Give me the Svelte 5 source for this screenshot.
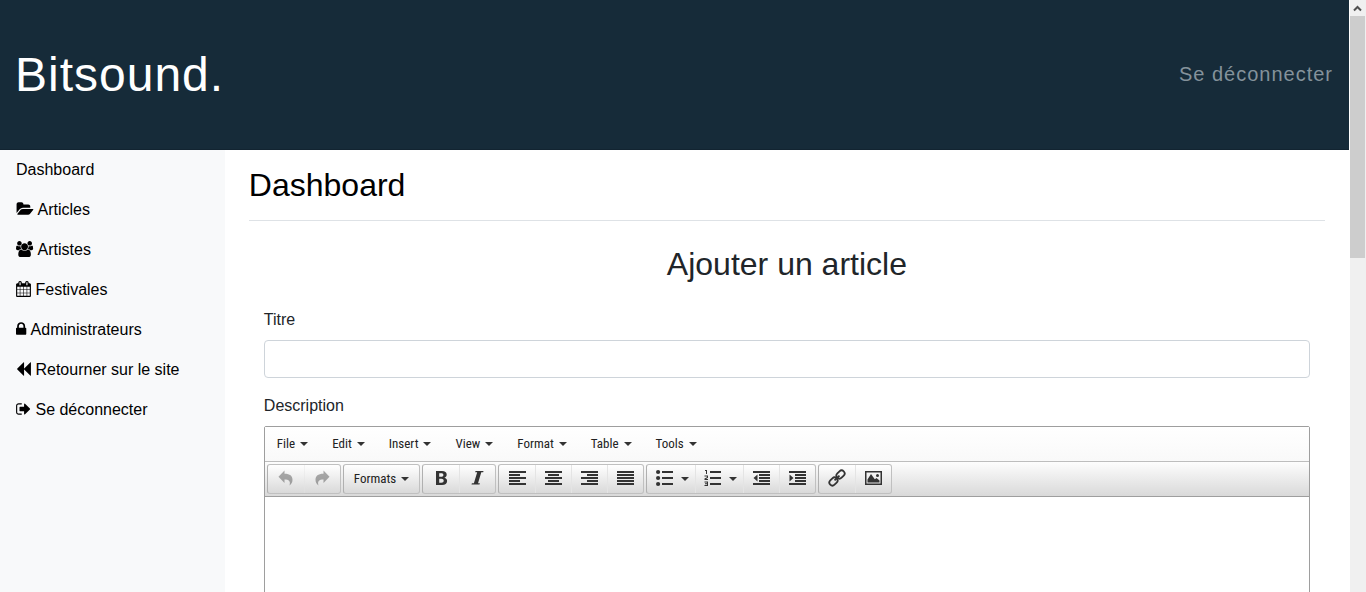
<script>
  const links = [
    { label: 'Dashboard' },
    {
      label: 'Articles', width: 18, box: '0 0 2016 1792',
      d: 'M1943 952q0 31-31 66l-336 396q-43 51-120.5 86.5t-143.5 35.5h-1088q-34 0-60.5-13t-26.5-43q0-31 31-66l336-396q43-51 120.5-86.5t143.5-35.5h1088q34 0 60.5 13t26.5 43zm-343-344v160h-832q-94 0-197 47.5t-164 119.5l-337 396-5 6q0-4-.5-12.5t-.5-12.5v-960q0-92 66-158t158-66h320q92 0 158 66t66 158v32h544q92 0 158 66t66 158z'
    },
    {
      label: 'Artistes', width: 18, box: '0 0 2016 1792',
      d: 'M593 896q-162 5-265 128h-134q-82 0-138-40.5t-56-118.5q0-353 124-353 6 0 43.5 21t97.5 42.5 119 21.5q67 0 133-23-5 37-5 66 0 139 81 256zm1071 637q0 120-73 189.5t-194 69.5h-874q-121 0-194-69.5t-73-189.5q0-53 3.5-103.5t14-109 26.5-108.5 43-97.5 62-81 85.5-53.5 111.5-20q10 0 43 21.5t73 48 107 48 135 21.5 135-21.5 107-48 73-48 43-21.5q61 0 111.5 20t85.5 53.5 62 81 43 97.5 26.5 108.5 14 109 3.5 103.5zm-1024-1277q0 106-75 181t-181 75-181-75-75-181 75-181 181-75 181 75 75 181zm704 384q0 159-112.5 271.5t-271.5 112.5-271.5-112.5-112.5-271.5 112.5-271.5 271.5-112.5 271.5 112.5 112.5 271.5zm576 225q0 78-56 118.5t-138 40.5h-134q-103-123-265-128 81-117 81-256 0-29-5-66 66 23 133 23 59 0 119-21.5t97.5-42.5 43.5-21q124 0 124 353zm-128-609q0 106-75 181t-181 75-181-75-75-181 75-181 181-75 181 75 75 181z'
    },
    {
      label: 'Festivales', width: 15, box: '64 0 1664 1792',
      d: 'M192 1664h288v-288h-288v288zm352 0h320v-288h-320v288zm-352-352h288v-320h-288v320zm352 0h320v-320h-320v320zm-352-384h288v-288h-288v288zm736 736h320v-288h-320v288zm-384-736h320v-288h-320v288zm768 736h288v-288h-288v288zm-384-352h320v-320h-320v320zm-352-864v-288q0-13-9.5-22.5t-22.5-9.5h-64q-13 0-22.5 9.5t-9.5 22.5v288q0 13 9.5 22.5t22.5 9.5h64q13 0 22.5-9.5t9.5-22.5zm736 864h288v-320h-288v320zm-384-384h320v-288h-320v288zm384 0h288v-288h-288v288zm32-480v-288q0-13-9.5-22.5t-22.5-9.5h-64q-13 0-22.5 9.5t-9.5 22.5v288q0 13 9.5 22.5t22.5 9.5h64q13 0 22.5-9.5t9.5-22.5zm384-64v1280q0 52-38 90t-90 38h-1408q-52 0-90-38t-38-90v-1280q0-52 38-90t90-38h128v-96q0-66 47-113t113-47h64q66 0 113 47t47 113v96h384v-96q0-66 47-113t113-47h64q66 0 113 47t47 113v96h128q52 0 90 38t38 90z'
    },
    {
      label: 'Administrateurs', width: 11, box: '320 0 1232 1792',
      d: 'M640 768h512v-192q0-106-75-181t-181-75-181 75-75 181v192zm832 96v576q0 40-28 68t-68 28h-960q-40 0-68-28t-28-68v-576q0-40 28-68t68-28h32v-192q0-184 132-316t316-132 316 132 132 316v192h32q40 0 68 28t28 68z'
    },
    {
      label: 'Retourner sur le site', width: 15, box: '64 0 1664 1792',
      d: 'M1683 141q19-19 32-13t13 32v1472q0 26-13 32t-32-13l-710-710q-9-9-13-19v710q0 26-13 32t-32-13l-710-710q-19-19-19-45t19-45l710-710q19-19 32-13t13 32v710q4-10 13-19z'
    },
    {
      label: 'Se déconnecter', width: 15, box: '64 0 1664 1792',
      d: 'M704 1440q0 4 1 20t.5 26.5-3 23.5-10 19.5-20.5 6.5h-320q-119 0-203.5-84.5t-84.5-203.5v-704q0-119 84.5-203.5t203.5-84.5h320q13 0 22.5 9.5t9.5 22.5q0 4 1 20t.5 26.5-3 23.5-10 19.5-20.5 6.5h-320q-66 0-113 47t-47 113v704q0 66 47 113t113 47h312l11.5 1 11.5 3 8 5.5 7 9 2 13.5zm928-544q0 26-19 45l-544 544q-19 19-45 19t-45-19-19-45v-288h-448q-26 0-45-19t-19-45v-384q0-26 19-45t45-19h448v-288q0-26 19-45t45-19 45 19l544 544q19 19 19 45z'
    }
  ];

  const menus = ['File', 'Edit', 'Insert', 'View', 'Format', 'Table', 'Tools'];

  // Toolbar glyphs are drawn on an 18 x 18 grid.
  const groups = [
    [
      { name: 'Undo', off: true, d: 'M7.500 1.500v3.300c5.500 0 8 2.300 8 6 0 2.400-1 4.300-3 5.700 1.300-4.200-.5-6-5-6v3.500L1.500 7.800z' },
      { name: 'Redo', off: true, d: 'M10.500 1.500v3.300c-5.500 0-8 2.300-8 6 0 2.400 1 4.300 3 5.700-1.300-4.200.5-6 5-6v3.500l6-6.200z' }
    ],
    [{ name: 'Formats', text: 'Formats', menu: true }],
    [
      { name: 'Bold', d: 'M4 2h6c3 0 4.700 1.300 4.700 3.600 0 1.700-.8 2.700-2.300 3.100 1.800.4 2.700 1.600 2.700 3.300 0 2.600-1.900 4-5 4H4zm3.200 2.200v3.500h1.900c1.500 0 2.300-.6 2.300-1.800 0-1.100-.8-1.700-2.300-1.700zm0 5.600v4h2.100c1.600 0 2.400-.7 2.400-2s-.8-2-2.400-2z' },
      { name: 'Italic', d: 'M7.500 2h8l-.3 1.200h-1.900L10 14.300h1.900l-.4 1.200h-8l.4-1.200h2L9.200 3.200h-2z' }
    ],
    [
      { name: 'Align left', d: 'M1 2h17v2H1zM1 5h11v2H1zM1 8h17v2H1zM1 11h11v2H1zM1 14h17v2H1z' },
      { name: 'Align center', d: 'M1 2h17v2H1zM4 5h11v2H4zM1 8h17v2H1zM4 11h11v2H4zM1 14h17v2H1z' },
      { name: 'Align right', d: 'M1 2h17v2H1zM7 5h11v2H7zM1 8h17v2H1zM7 11h11v2H7zM1 14h17v2H1z' },
      { name: 'Justify', d: 'M1 2h17v2H1zM1 5h17v2H1zM1 8h17v2H1zM1 11h17v2H1zM1 14h17v2H1z' }
    ],
    [
      { name: 'Bullet list', menu: true, d: 'M7 2h11v2H7zM7 8h11v2H7zM7 14h11v2H7zM1 3a2.100 2.100 0 1 0 4.200 0a2.100 2.100 0 1 0-4.200 0zM1 9a2.100 2.100 0 1 0 4.200 0a2.100 2.100 0 1 0-4.200 0zM1 15a2.100 2.100 0 1 0 4.200 0a2.100 2.100 0 1 0-4.200 0z' },
      { name: 'Numbered list', menu: true, d: 'M7 2h11v2H7zM7 8h11v2H7zM7 14h11v2H7zM2 1h2v4H3V2H2zM1.500 6.500H5v2.300L3 10h2v1H1.500V9.500L4 8.300v-.8H1.500zM1.500 12.500H5V17H1.500v-1H4v-.8H2v-.9h2v-.8H1.500z' },
      { name: 'Decrease indent', d: 'M1 2h17v2H1zM7 5h11v2H7zM7 8h11v2H7zM7 11h11v2H7zM1 14h17v2H1zM5.500 5.500v7L1.500 9z' },
      { name: 'Increase indent', d: 'M1 2h17v2H1zM7 5h11v2H7zM7 8h11v2H7zM7 11h11v2H7zM1 14h17v2H1zM1.500 5.500v7l4-3.500z' }
    ],
    [
      { name: 'Link', link: true },
      { name: 'Image', d: 'M1 2h17v14H1zm1.500 1.500v11h14v-11zM3.500 13.500v-3L7 5l3.800 5.200L12.500 9l3 2.500v2zM12 6.500a1.500 1.500 0 1 0 3 0a1.500 1.500 0 1 0-3 0z' }
    ]
  ];
</script>

<div class="window">
  <div class="page">
    <header>
      <a class="brand" href="#home">Bitsound.</a>
      <a class="logout" href="#logout">Se déconnecter</a>
    </header>
    <div class="body">
      <nav>
        {#each links as link}
          <a href="#nav">{#if link.d}<svg width={link.width} height="16" viewBox={link.box} fill-rule="evenodd" aria-hidden="true"><path d={link.d} /></svg>{' '}{/if}{link.label}</a>
        {/each}
      </nav>
      <main>
        <h1>Dashboard</h1>
        <form>
          <h2>Ajouter un article</h2>
          <label for="title">Titre</label>
          <input id="title" type="text" />
          <label for="description">Description</label>
          <div class="editor">
            <div class="menubar">
              {#each menus as menu}
                <button type="button">{menu}<i class="caret"></i></button>
              {/each}
            </div>
            <div class="toolbar">
              {#each groups as group}
                <div class="group">
                  {#each group as item}
                    <button type="button" class:off={item.off} class:split={item.menu && !item.text} class:wide={item.text} aria-label={item.name}>
                      {#if item.text}
                        {item.text}
                      {:else if item.link}
                        <svg width="18" height="18" viewBox="0 0 18 18" aria-hidden="true">
                          <g fill="none" stroke="#333" stroke-width="1.8" transform="rotate(-45 9 9)">
                            <rect x="-0.500" y="6" width="9" height="6" rx="3" />
                            <rect x="9.500" y="6" width="9" height="6" rx="3" />
                            <path d="M5.500 9h7" />
                          </g>
                        </svg>
                      {:else}
                        <svg width="18" height="18" viewBox="0 0 18 18" fill-rule="evenodd" aria-hidden="true"><path d={item.d} /></svg>
                      {/if}
                      {#if item.menu}<i class="caret"></i>{/if}
                    </button>
                  {/each}
                </div>
              {/each}
            </div>
            <textarea id="description"></textarea>
          </div>
        </form>
      </main>
    </div>
  </div>
  <div class="scrollbar" aria-hidden="true">
    <svg width="15" height="16" viewBox="0 0 15 16"><path d="M4 10.500L7.500 7L11 10.500" fill="none" stroke="#505050" stroke-width="2" /></svg>
    <div class="thumb"></div>
  </div>
</div>

<style>
  :global(body) {
    margin: 0;
    overflow: hidden;
  }
  .window {
    display: flex;
    height: 100vh;
    overflow: hidden;
    background: #fff;
    color: #212529;
    font: 16px/24px "Liberation Sans", Arial, sans-serif;
  }
  .window * {
    box-sizing: border-box;
  }
  a {
    color: inherit;
    text-decoration: none;
  }
  .page {
    flex: 1;
    min-width: 0;
    display: flex;
    flex-direction: column;
  }
  header {
    display: flex;
    align-items: center;
    justify-content: space-between;
    flex: none;
    height: 150px;
    padding: 0 16px 1px 15px;
    background: #162b39;
    border-bottom: 1px solid #122431;
    letter-spacing: 1px;
  }
  .brand {
    padding-top: 2px;
    color: #fff;
    font-size: 48px;
    line-height: 72px;
  }
  .logout {
    color: #84929b;
    font-size: 20px;
    line-height: 30px;
  }
  .body {
    flex: 1;
    min-height: 0;
    display: flex;
  }
  nav {
    flex: 0 0 16.667%;
    background: #f8f9fa;
    color: #000;
  }
  nav a {
    display: block;
    padding: 8px 16px;
  }
  nav svg {
    vertical-align: -2px;
  }
  main {
    flex: 1;
    min-width: 0;
    padding: 16px 24px 0;
  }
  h1, h2 {
    margin: 0 0 24px;
    font-size: 32px;
    line-height: 38px;
    font-weight: 400;
  }
  h1 {
    padding-bottom: 16px;
    border-bottom: 1px solid #dee2e6;
    color: #000;
  }
  h2 {
    margin-bottom: 25px;
    text-align: center;
  }
  form {
    padding: 0 15px;
  }
  label {
    display: block;
    margin-bottom: 8px;
  }
  input {
    display: block;
    width: 100%;
    height: 38px;
    margin-bottom: 16px;
    padding: 6px 12px;
    border: 1px solid #ced4da;
    border-radius: 4px;
    font: inherit;
  }
  .editor {
    border: 1px solid #9e9e9e;
    border-radius: 2px;
  }
  .editor button {
    display: flex;
    align-items: center;
    justify-content: center;
    gap: 5px;
    padding: 0;
    border: 0;
    background: none;
    color: #222;
    font: 13px/20px "Roboto Condensed", "Liberation Sans Narrow", "Liberation Sans", sans-serif;
  }
  .menubar {
    display: flex;
    height: 35px;
    border-bottom: 1px solid #bdbdbd;
    background: linear-gradient(#fff, #f9f9f9);
  }
  .menubar button {
    padding: 0 12px;
  }
  .caret {
    border: 4px solid transparent;
    border-top-color: #333;
    border-bottom: 0;
  }
  .toolbar {
    display: flex;
    gap: 2px;
    height: 35px;
    padding: 2px;
    border-bottom: 1px solid #9e9e9e;
    background: linear-gradient(#fdfdfd, #d9d9d9);
  }
  .group {
    display: flex;
    height: 30px;
    border: 1px solid #c0c0c0;
    border-left-color: #b0b0b0;
    border-radius: 3px;
    background: linear-gradient(#fff, #d9d9d9);
  }
  .group button {
    min-width: 36px;
  }
  .group button + button {
    box-shadow: inset 1px 0 #e4e4e4;
  }
  .group .split {
    width: 48px;
    padding-left: 2px;
    gap: 8px;
  }
  .group .wide {
    padding: 0 10px;
  }
  .group svg {
    flex: none;
    margin-bottom: 2px;
    fill: #333;
  }
  .group .off {
    opacity: 0.4;
  }
  textarea {
    display: block;
    width: 100%;
    height: 400px;
    border: 0;
    outline: 0;
    resize: none;
  }
  .scrollbar {
    flex: none;
    width: 17px;
    padding-right: 1px;
    border-left: 1px solid #fff;
    background: #f0f0f0;
  }
  .scrollbar svg {
    display: block;
  }
  .thumb {
    height: 42vh;
    max-height: 242px;
    background: #cdcdcd;
  }
</style>
